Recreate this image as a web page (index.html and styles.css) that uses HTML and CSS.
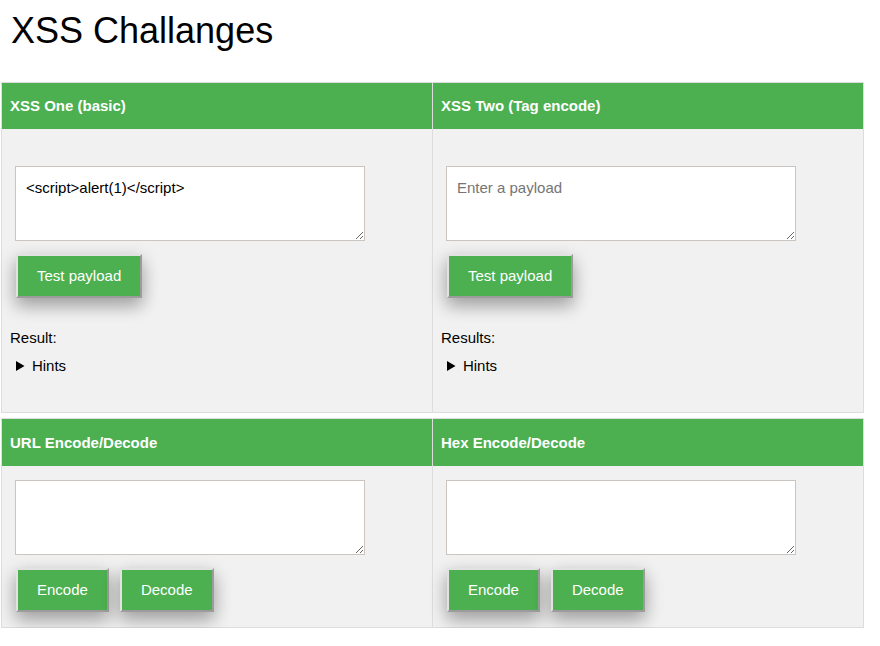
FILE: index.html
```html
<!DOCTYPE html>
<html>
<head>
<meta charset="utf-8">
<title>XSS Challanges</title>
<link rel="stylesheet" href="styles.css">
</head>
<body>
<h1 class="title">XSS Challanges</h1>

<div class="panel">
  <div class="head">XSS One (basic)</div>
  <div class="head">XSS Two (Tag encode)</div>
  <div class="cell cell-tall">
    <textarea class="input">&lt;script&gt;alert(1)&lt;/script&gt;</textarea>
    <div class="actions">
      <button class="btn">Test payload</button>
    </div>
    <div class="result">Result:</div>
    <details class="hints"><summary>Hints</summary><p>Try a script tag.</p></details>
  </div>
  <div class="cell cell-tall">
    <textarea class="input" placeholder="Enter a payload"></textarea>
    <div class="actions">
      <button class="btn">Test payload</button>
    </div>
    <div class="result">Results:</div>
    <details class="hints"><summary>Hints</summary><p>Tags are encoded.</p></details>
  </div>
</div>

<div class="panel panel-second">
  <div class="head">URL Encode/Decode</div>
  <div class="head">Hex Encode/Decode</div>
  <div class="cell">
    <textarea class="input"></textarea>
    <div class="actions">
      <button class="btn">Encode</button>
      <button class="btn">Decode</button>
    </div>
  </div>
  <div class="cell">
    <textarea class="input"></textarea>
    <div class="actions">
      <button class="btn">Encode</button>
      <button class="btn">Decode</button>
    </div>
  </div>
</div>
</body>
</html>
```

FILE: styles.css
```css
html, body {
  margin: 0;
  padding: 0;
  background: #ffffff;
}

body {
  font-family: "Liberation Sans", Arial, Helvetica, sans-serif;
  font-size: 15px;
  color: #000000;
}

.title {
  font-size: 36px;
  font-weight: normal;
  line-height: 41px;
  margin: 10px 0 31px 11px;
}

.panel {
  display: grid;
  grid-template-columns: 430px 430px;
  column-gap: 1px;
  width: 861px;
  margin-left: 1px;
  border: 1px solid #dddddd;
  background: #dddddd;
}

.panel-second {
  margin-top: 5px;
}

.head {
  background: #4caf50;
  color: #ffffff;
  font-weight: bold;
  font-size: 15px;
  line-height: 18px;
  padding: 14px 8px 14px 8px;
}

.panel-second .head {
  padding-top: 15px;
}

.cell {
  background: #f1f1f1;
  padding: 14px 8px 15px 8px;
  line-height: 17px;
}

.cell-tall {
  padding-top: 37px;
  padding-bottom: 38px;
}

.input {
  display: block;
  box-sizing: border-box;
  width: 350px;
  height: 75px;
  margin: 0 0 0 5px;
  padding: 12px 10px;
  border: 1px solid #cac5c0;
  background: #ffffff;
  font-family: "Liberation Sans", Arial, Helvetica, sans-serif;
  font-size: 15px;
  line-height: 17px;
  color: #000000;
  resize: vertical;
}

.input::placeholder {
  color: #757575;
}

.actions {
  display: flex;
  gap: 11px;
  margin: 13px 0 0 6px;
}

.btn {
  background: #4caf50;
  color: #ffffff;
  font-family: "Liberation Sans", Arial, Helvetica, sans-serif;
  font-size: 15px;
  line-height: 16px;
  padding: 12px 19px;
  border-width: 2px;
  border-style: solid;
  border-color: #e2e2e2 #9c9c9c #9c9c9c #e2e2e2;
  box-shadow: 0 8px 16px 0 rgba(0, 0, 0, 0.2), 0 6px 20px 0 rgba(0, 0, 0, 0.19);
  cursor: pointer;
}

.result {
  margin-top: 31px;
}

.hints {
  margin-top: 11px;
}

.hints summary {
  cursor: pointer;
  padding-left: 6px;
}
```
